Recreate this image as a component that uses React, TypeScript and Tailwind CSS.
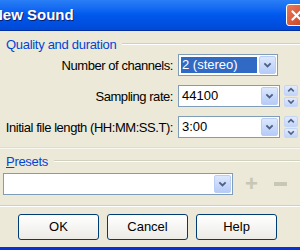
import React from 'react';

const font = { fontFamily: '"Liberation Sans", Arial, sans-serif' };

const Chevron: React.FC<{ up?: boolean; size?: number }> = ({ up, size = 9 }) => (
  <svg width={size} height={size * 0.7} viewBox="0 0 10 7" className={up ? 'rotate-180' : ''}>
    <path d="M1.5 1.5 L5 5 L8.5 1.5" fill="none" stroke="#4d6185" strokeWidth="2" />
  </svg>
);

const DropButton: React.FC = () => (
  <div className="w-[17px] self-stretch m-[1px] rounded-[2px] border border-[#b9cdf5] bg-gradient-to-b from-[#dde8fd] to-[#b6cbf7] flex items-center justify-center">
    <Chevron />
  </div>
);

const Spin: React.FC = () => (
  <div className="ml-[4px] w-[14px] h-[22px] flex flex-col gap-[1px]">
    <div className="flex-1 rounded-[2px] border border-[#c5d5f6] bg-gradient-to-b from-[#e3ebfd] to-[#c3d4f8] flex items-center justify-center">
      <Chevron up size={8} />
    </div>
    <div className="flex-1 rounded-[2px] border border-[#c5d5f6] bg-gradient-to-b from-[#e3ebfd] to-[#c3d4f8] flex items-center justify-center">
      <Chevron size={8} />
    </div>
  </div>
);

const Combo: React.FC<{ value: string; selected?: boolean; width: string }> = ({ value, selected, width }) => (
  <div className={`${width} h-[22px] border border-[#7f9db9] bg-white flex items-stretch`}>
    <div className="flex-1 flex items-center pl-[2px] pr-[1px] py-[2px]">
      {selected ? (
        <span className="w-full h-full bg-[#316ac5] text-white flex items-center pl-[1px] text-[13px]">{value}</span>
      ) : (
        <span className="pl-[1px] text-[13px] text-black">{value}</span>
      )}
    </div>
    <DropButton />
  </div>
);

const Row: React.FC<{ label: string; value: string; selected?: boolean; spin?: boolean }> = ({ label, value, selected, spin }) => (
  <div className="flex items-center h-[22px]">
    <div className="w-[175px] pr-[2px] text-right text-[13px] leading-none text-black tracking-[-0.45px] whitespace-nowrap">{label}</div>
    <div className="ml-[3px] flex items-center">
      <Combo value={value} selected={selected} width={spin ? 'w-[102px]' : 'w-[100px]'} />
      {spin && <Spin />}
    </div>
  </div>
);

const GroupTitle: React.FC<{ children: React.ReactNode }> = ({ children }) => (
  <div className="flex items-center h-[14px] pl-[6px]">
    <span className="text-[13px] leading-none text-[#0046d5] tracking-[-0.3px] pr-[6px] whitespace-nowrap">{children}</span>
    <div className="flex-1 h-[2px] border-t border-[#d0d0bf] border-b border-b-white" />
  </div>
);

const XpButton: React.FC<{ label: string }> = ({ label }) => (
  <div className="w-[81px] h-[26px] rounded-[3px] border border-[#003c74] bg-gradient-to-b from-white to-[#ecebe6] flex items-center justify-center text-[13px] text-black">
    {label}
  </div>
);

export default function App() {
  return (
    <div className="w-[300px] h-[250px] overflow-hidden flex flex-col bg-[#ece9d8]" style={font}>
      {/* title bar */}
      <div className="h-[31px] shrink-0 bg-gradient-to-b from-[#2a7ef6] via-[#0058ee] to-[#0049d6] border-b border-[#0030a0] flex items-center justify-between">
        <span className="ml-[-8px] text-white font-bold text-[15px] [text-shadow:1px_1px_0_#0a1f6a]">New Sound</span>
        <div className="w-[21px] h-[22px] mr-[-7px] rounded-[3px] border border-white bg-gradient-to-br from-[#e8795a] to-[#c93f1c] flex items-center justify-center">
          <svg width="11" height="11" viewBox="0 0 11 11">
            <path d="M1.5 1.5 L9.5 9.5 M9.5 1.5 L1.5 9.5" stroke="white" strokeWidth="2.2" strokeLinecap="round" />
          </svg>
        </div>
      </div>

      {/* body */}
      <div className="flex-1 flex flex-col pt-[6px]">
        <GroupTitle>Quality and duration</GroupTitle>
        <div className="mt-[3px] flex flex-col gap-[9px]">
          <Row label="Number of channels:" value="2 (stereo)" selected />
          <Row label="Sampling rate:" value="44100" spin />
          <Row label="Initial file length (HH:MM:SS.T):" value="3:00" spin />
        </div>
        <div className="mt-[9px] h-[2px] border-t border-[#e0ddcb] border-b border-b-[#f7f6ef]" />

        <div className="mt-[5px]">
          <GroupTitle>
            <span className="text-[#0046d5]"><span className="underline">P</span>resets</span>
          </GroupTitle>
        </div>
        <div className="mt-[5px] flex items-center pl-[3px]">
          <Combo value="" width="w-[230px]" />
          <span className="ml-[12px] text-[22px] leading-none font-bold text-[#c8c6b4]">+</span>
          <span className="ml-[16px] w-[13px] h-[4px] bg-[#c8c6b4]" />
        </div>
        <div className="mt-[10px] h-[2px] border-t border-[#d0d0bf] border-b border-b-white" />

        <div className="mt-[7px] flex gap-[8px] pl-[18px]">
          <XpButton label="OK" />
          <XpButton label="Cancel" />
          <XpButton label="Help" />
        </div>
      </div>
      <div className="h-[3px] shrink-0 bg-[#0831d9]" />
    </div>
  );
}
